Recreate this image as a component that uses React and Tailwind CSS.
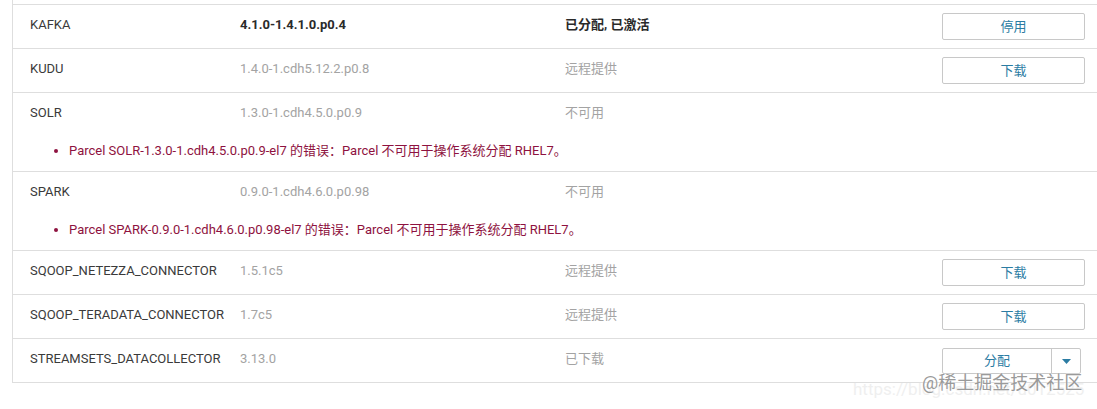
import React from 'react';

const PARCELS = [
  { name: 'KAFKA', version: '4.1.0-1.4.1.0.p0.4', status: '已分配, 已激活', active: true, action: '停用' },
  { name: 'KUDU', version: '1.4.0-1.cdh5.12.2.p0.8', status: '远程提供', action: '下载' },
  {
    name: 'SOLR',
    version: '1.3.0-1.cdh4.5.0.p0.9',
    status: '不可用',
    error: 'Parcel SOLR-1.3.0-1.cdh4.5.0.p0.9-el7 的错误：Parcel 不可用于操作系统分配 RHEL7。',
  },
  {
    name: 'SPARK',
    version: '0.9.0-1.cdh4.6.0.p0.98',
    status: '不可用',
    error: 'Parcel SPARK-0.9.0-1.cdh4.6.0.p0.98-el7 的错误：Parcel 不可用于操作系统分配 RHEL7。',
  },
  { name: 'SQOOP_NETEZZA_CONNECTOR', version: '1.5.1c5', status: '远程提供', action: '下载' },
  { name: 'SQOOP_TERADATA_CONNECTOR', version: '1.7c5', status: '远程提供', action: '下载' },
  { name: 'STREAMSETS_DATACOLLECTOR', version: '3.13.0', status: '已下载', split: '分配' },
];

const FONT = "font-['Roboto','Noto_Sans_CJK_SC',sans-serif]";

function ActionButton({ label }) {
  return (
    <button className="mt-[8px] h-[27px] w-[143px] rounded-[2px] border border-[#c8c8c8] bg-white text-[13px] leading-[25px] text-[#2b7ca3]">
      {label}
    </button>
  );
}

function SplitButton({ label }) {
  return (
    <div className="mt-[9px] flex h-[26px] w-[139px] rounded-[2px] border border-[#c8c8c8] bg-white">
      <button className="flex-1 border-r border-[#c8c8c8] text-[13px] leading-[24px] text-[#2b7ca3]">{label}</button>
      <button className="flex w-[28px] items-center justify-center">
        <svg width="9" height="5" viewBox="0 0 9 5">
          <path d="M0 0h9L4.5 5z" fill="#2b7ca3" />
        </svg>
      </button>
    </div>
  );
}

function ParcelRow({ parcel }) {
  const tone = parcel.active ? 'font-bold text-[#2a2a2a]' : 'text-[#a3a3a3]';
  return (
    <div className="border-t border-[#dedede]">
      <div className="grid h-[43px] grid-cols-[210px_325px_377px_1fr] pl-[17px]">
        <div className="pt-[10px] text-[13px] leading-[20px] whitespace-nowrap text-[#3a3a3a]">{parcel.name}</div>
        <div className={`pt-[10px] text-[13px] leading-[20px] ${tone}`}>{parcel.version}</div>
        <div className={`pt-[10px] text-[13px] leading-[20px] ${tone}`}>{parcel.status}</div>
        <div>
          {parcel.action && <ActionButton label={parcel.action} />}
          {parcel.split && <SplitButton label={parcel.split} />}
        </div>
      </div>
      {parcel.error && (
        <div className="flex h-[35px] items-start pt-[5px] pl-[41px] text-[13px] leading-[20px] text-[#8e1240]">
          <span className="mt-[8px] mr-[11px] h-[4px] w-[4px] rounded-full bg-[#8e1240]" />
          <span>{parcel.error}</span>
        </div>
      )}
    </div>
  );
}

export default function App() {
  return (
    <div className={`relative h-[409px] w-full overflow-hidden bg-white ${FONT}`}>
      <div className="ml-[12px] border-b border-l border-[#dedede]">
        <div className="h-[4px]" />
        {PARCELS.map((p) => (
          <ParcelRow key={p.name} parcel={p} />
        ))}
      </div>

      {/* watermark */}
      <div className="pointer-events-none absolute top-[378px] left-[853px] text-[17px] leading-[22px] whitespace-nowrap text-[#efefef]">
        https://blog.csdn.net/u012525
      </div>
      <div className="pointer-events-none absolute top-[371px] left-[922px] text-[18px] leading-[24px] whitespace-nowrap text-[#9a9a9a] [text-shadow:0_0_2px_#ffffff]">
        @稀土掘金技术社区
      </div>
    </div>
  );
}
